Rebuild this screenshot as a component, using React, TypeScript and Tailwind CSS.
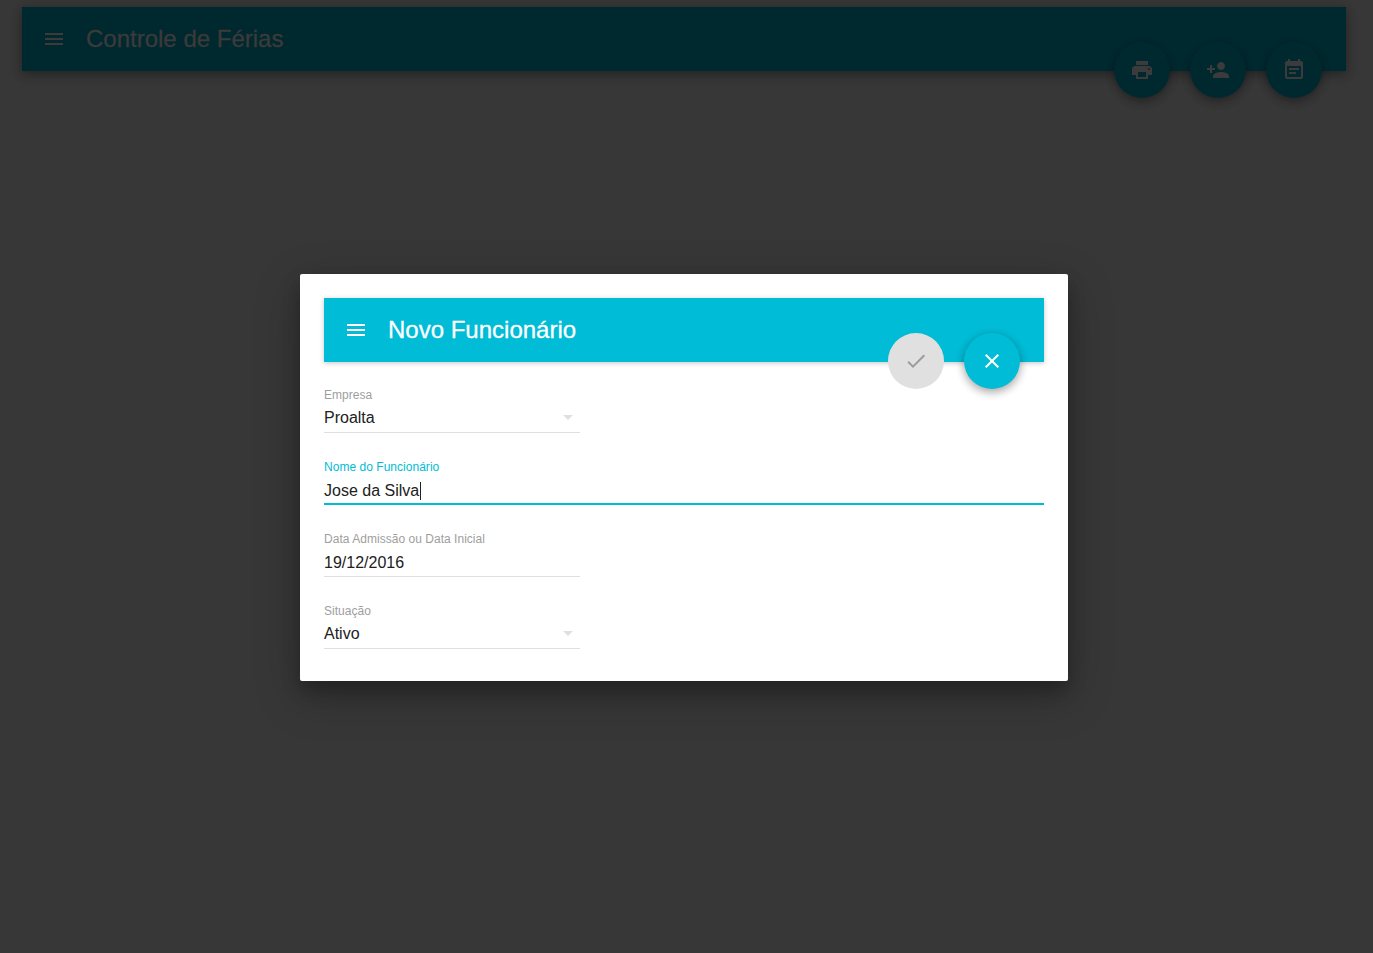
import React from "react";
import { MdPrint, MdPersonAdd, MdEventNote, MdMenu, MdClose, MdCheck, MdArrowDropDown } from "react-icons/md";

function Field({ label, value, select, focused }: { label: string; value: string; select?: boolean; focused?: boolean }) {
  return (
    <div className={`flex h-[72px] flex-col ${focused ? "w-full" : "w-64"}`}>
      <div className={`mt-[17px] h-[18px] whitespace-nowrap text-[12px] leading-[18px] tracking-[0.03px] ${focused ? "text-[#00bcd4]" : "text-[#9e9e9e]"}`}>
        {label}
      </div>
      <div
        className={`flex h-[29px] items-start justify-between text-[16px] leading-[24px] text-[#212121] ${
          focused ? "border-b-2 border-[#00bcd4]" : "border-b border-[#e0e0e0]"
        } ${select ? "pt-px" : "pt-[3px]"}`}
      >
        <span className={`flex items-center whitespace-nowrap ${select ? "pt-px" : ""}`}>
          {value}
          {focused && <span className="ml-px h-[18px] w-px bg-[#212121]" />}
        </span>
        {select && <MdArrowDropDown size={24} className="text-[#e0e0e0]" />}
      </div>
    </div>
  );
}

export default function App() {
  return (
    <div className="relative flex h-[953px] w-[1373px] flex-col overflow-hidden bg-[#373737] pt-[7px] font-['Liberation_Sans',Arial,sans-serif]">
      <header className="relative mr-[27px] ml-[22px] flex h-16 items-center bg-[#00292f] pl-5 text-[#3c3a3a] shadow-[0_3px_10px_rgba(0,0,0,0.16),0_3px_10px_rgba(0,0,0,0.23)]">
        <MdMenu size={24} />
        <h1 className="-mt-px ml-5 text-[24px] leading-[63px] [-webkit-text-stroke:0.3px_#3c3a3a]">Controle de Férias</h1>
        <div className="absolute top-[35px] right-6 flex gap-5">
          {[MdPrint, MdPersonAdd, MdEventNote].map((Icon, i) => (
            <button key={i} className="flex size-14 items-center justify-center rounded-full bg-[#00292f] shadow-[0_3px_10px_rgba(0,0,0,0.16),0_3px_10px_rgba(0,0,0,0.23)]">
              <Icon size={24} />
            </button>
          ))}
        </div>
      </header>
      <section className="absolute top-[274px] left-[300px] h-[407px] w-[768px] rounded-[2px] bg-white px-6 pt-6 shadow-[0_14px_45px_rgba(0,0,0,0.25),0_10px_18px_rgba(0,0,0,0.22)]">
        <header className="relative flex h-16 items-center bg-[#00bcd7] pl-5 text-white shadow-[0_1px_6px_rgba(0,0,0,0.12),0_1px_4px_rgba(0,0,0,0.12)]">
          <MdMenu size={24} />
          <h2 className="-mt-px ml-5 text-[24px] leading-[63px] [-webkit-text-stroke:0.3px_white]">Novo Funcionário</h2>
          <div className="absolute top-[35px] right-6 flex gap-5">
            <button className="flex size-14 items-center justify-center rounded-full bg-[#e0e0e0] text-[#9c9c9c]">
              <MdCheck size={24} />
            </button>
            <button className="flex size-14 items-center justify-center rounded-full bg-[#00bcd7] shadow-[0_3px_10px_rgba(0,0,0,0.16),0_3px_10px_rgba(0,0,0,0.23)]">
              <MdClose size={24} />
            </button>
          </div>
        </header>
        <div className="mt-[7px] flex flex-col">
          <Field label="Empresa" value="Proalta" select />
          <Field label="Nome do Funcionário" value="Jose da Silva" focused />
          <Field label="Data Admissão ou Data Inicial" value="19/12/2016" />
          <Field label="Situação" value="Ativo" select />
        </div>
      </section>
    </div>
  );
}
